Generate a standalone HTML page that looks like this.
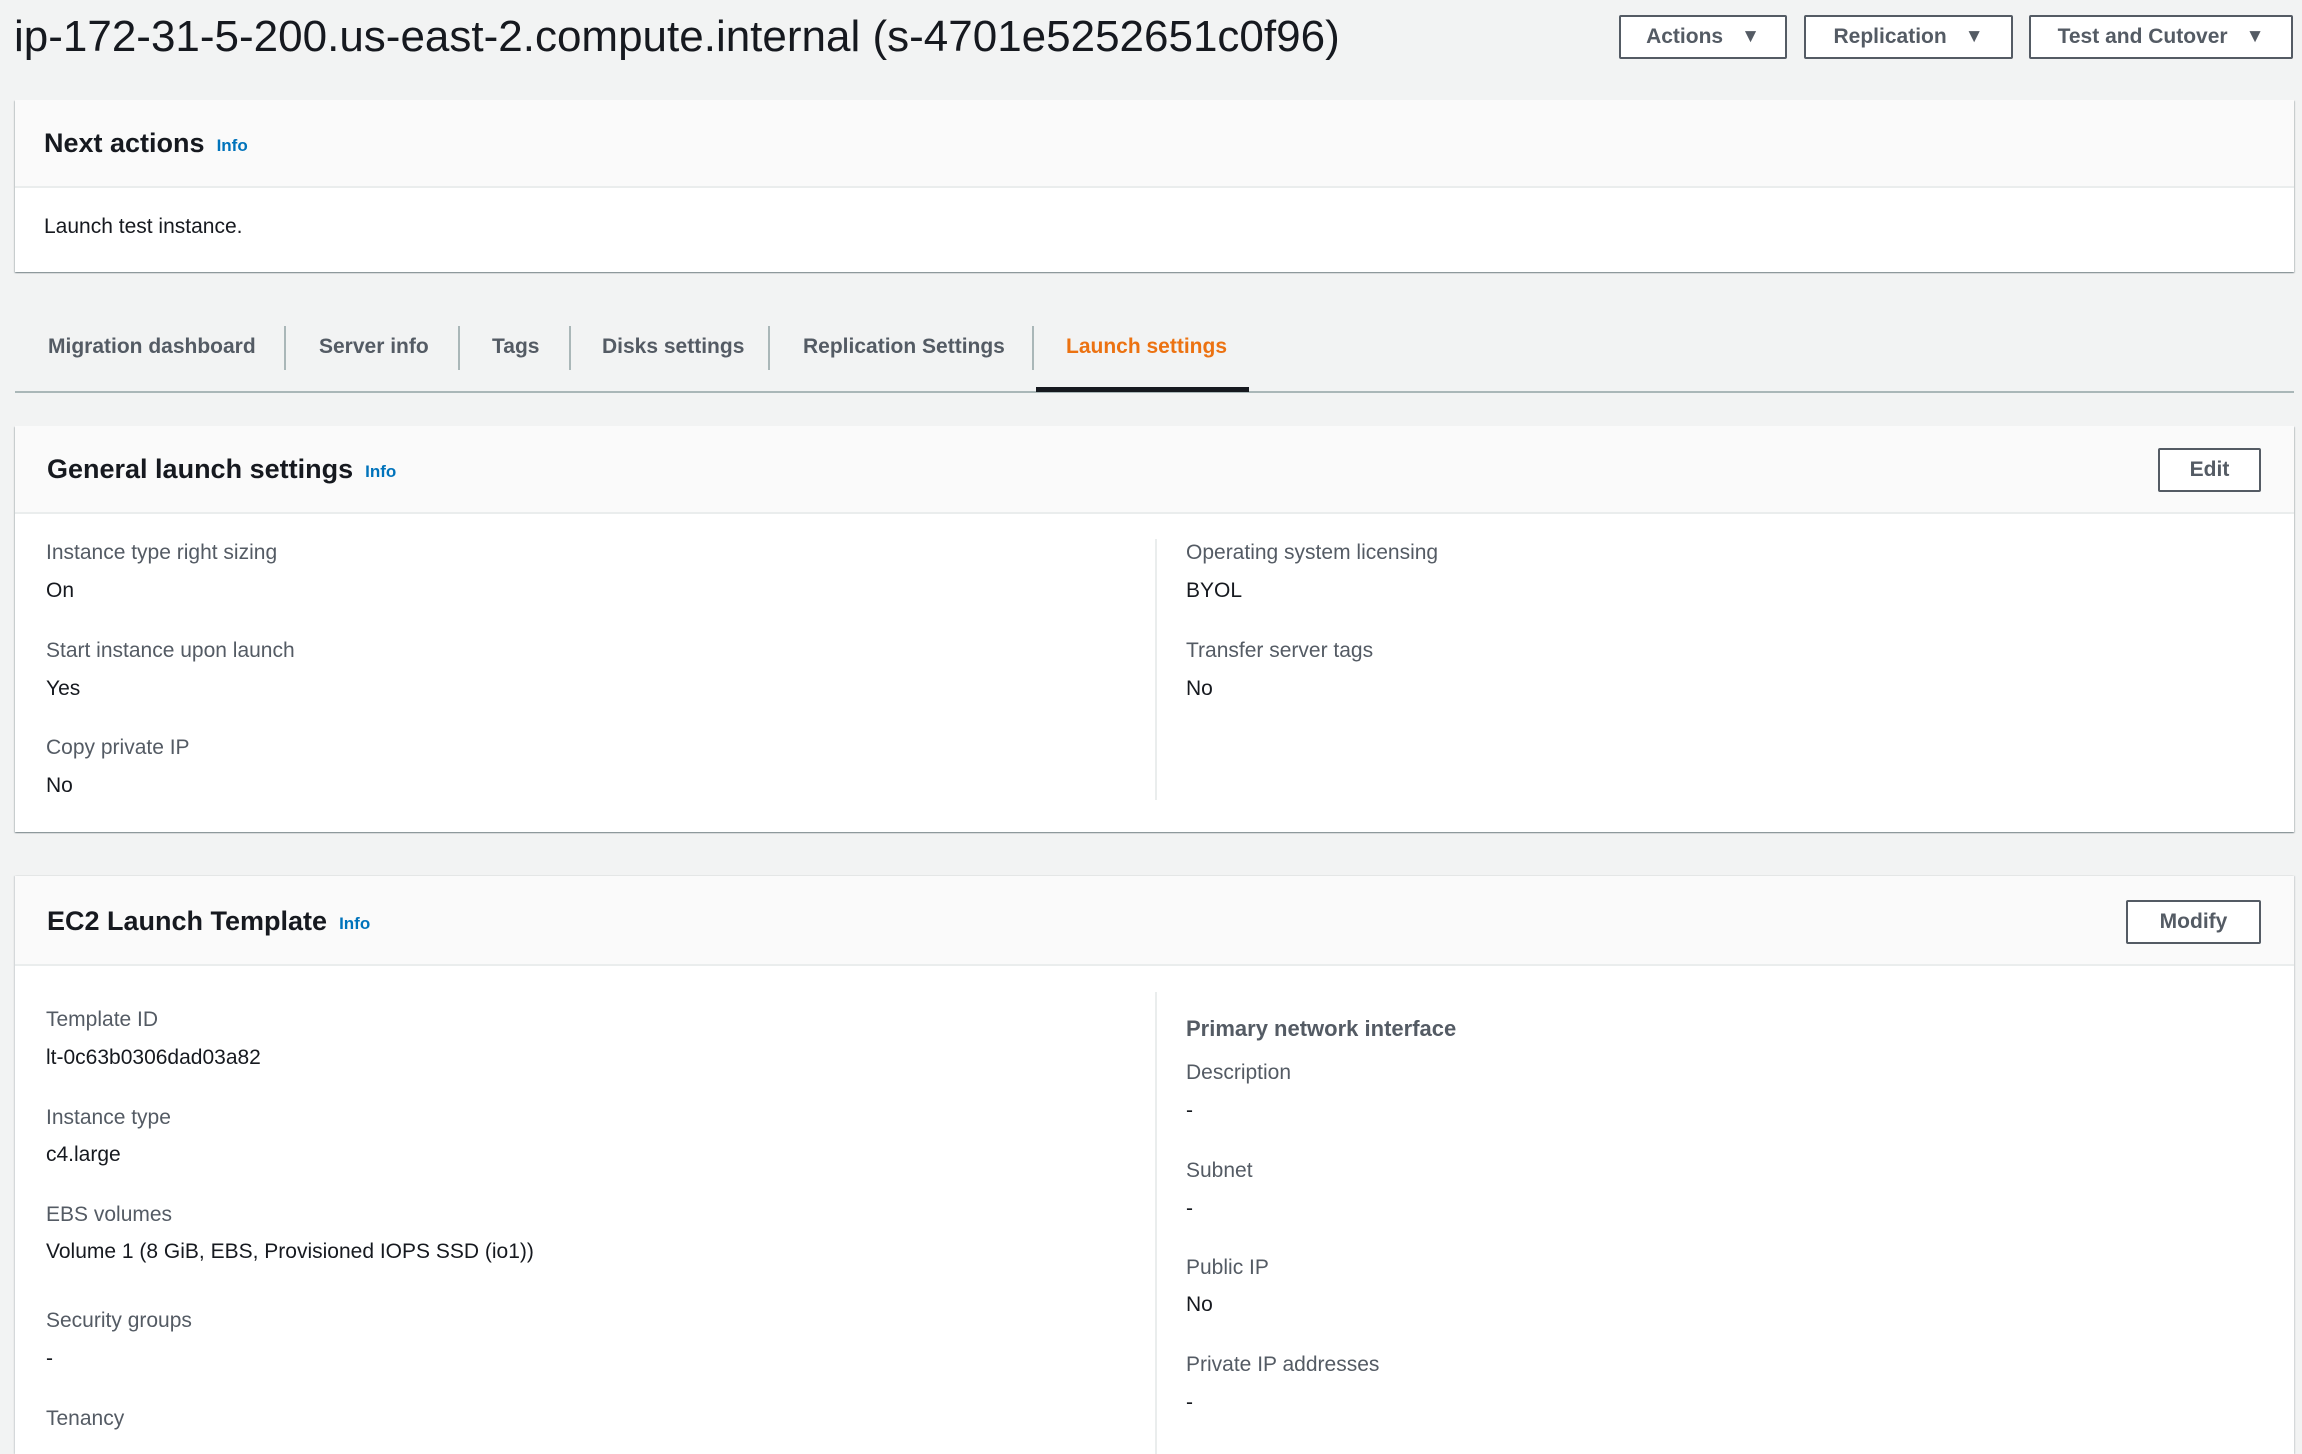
<!DOCTYPE html>
<html><head><meta charset="utf-8"><style>
*{margin:0;padding:0;box-sizing:border-box}
html,body{width:2302px;height:1454px;overflow:hidden}
body{background:#f2f3f3;font-family:"Liberation Sans",sans-serif;color:#16191f;position:relative}
.t{position:absolute;line-height:30px;white-space:nowrap}
.lab{font-size:21px;color:#545b64}
.val{font-size:21px;color:#16191f}
.h{font-size:27px;font-weight:bold;color:#16191f}
.info{font-size:17px;font-weight:bold;color:#0073bb;margin-left:12px;vertical-align:1px}
.btn{position:absolute;border:2px solid #545b64;border-radius:2px;background:#fff;color:#545b64;font-weight:bold;font-size:21px;display:flex;align-items:center;justify-content:center}
.btn .a{font-size:19px;margin-left:18px}
.card{position:absolute;left:15px;width:2279px;background:#fff;box-shadow:0 1px 1px rgba(0,28,36,.3),1px 1px 1px rgba(0,28,36,.15),-1px 1px 1px rgba(0,28,36,.15)}
.hd{position:absolute;left:0;top:0;width:100%;background:#fafafa;border-bottom:2px solid #eaeded}
.sep{position:absolute;top:326px;width:2px;height:44px;background:#aab7b8}
.tab{font-size:21px;font-weight:bold;color:#545b64;top:332px}
.vd{position:absolute;width:2px;background:#eaeded}
</style></head><body>
<div class="t" style="left:14px;top:13px;line-height:48px;font-size:44px;color:#16191f">ip-172-31-5-200.us-east-2.compute.internal (s-4701e5252651c0f96)</div>
<div class="btn" style="left:1619px;top:15px;width:168px;height:44px">Actions<span class="a">▼</span></div>
<div class="btn" style="left:1804px;top:15px;width:209px;height:44px">Replication<span class="a">▼</span></div>
<div class="btn" style="left:2029px;top:15px;width:264px;height:44px">Test and Cutover<span class="a">▼</span></div>

<div class="card" style="top:100px;height:172px">
<div class="hd" style="height:88px"></div>
</div>
<div class="t h" style="left:44px;top:128px">Next actions<span class="info">Info</span></div>
<div class="t val" style="left:44px;top:212px">Launch test instance.</div>

<div class="t tab" style="left:48px">Migration dashboard</div>
<div class="sep" style="left:284px"></div>
<div class="t tab" style="left:319px">Server info</div>
<div class="sep" style="left:458px"></div>
<div class="t tab" style="left:492px">Tags</div>
<div class="sep" style="left:569px"></div>
<div class="t tab" style="left:602px">Disks settings</div>
<div class="sep" style="left:768px"></div>
<div class="t tab" style="left:803px">Replication Settings</div>
<div class="sep" style="left:1032px"></div>
<div class="t tab" style="left:1066px;color:#ec7211">Launch settings</div>
<div style="position:absolute;left:15px;top:391px;width:2279px;height:2px;background:#aab7b8"></div>
<div style="position:absolute;left:1036px;top:387px;width:213px;height:5px;background:#16191f"></div>

<div class="card" style="top:426px;height:406px">
<div class="hd" style="height:88px"></div>
<div class="vd" style="left:1140px;top:113px;height:261px"></div>
</div>
<div class="t h" style="left:47px;top:454px">General launch settings<span class="info">Info</span></div>
<div class="btn" style="left:2158px;top:448px;width:103px;height:44px">Edit</div>
<div class="t lab" style="left:46px;top:538px">Instance type right sizing</div>
<div class="t val" style="left:46px;top:576px">On</div>
<div class="t lab" style="left:46px;top:636px">Start instance upon launch</div>
<div class="t val" style="left:46px;top:674px">Yes</div>
<div class="t lab" style="left:46px;top:733px">Copy private IP</div>
<div class="t val" style="left:46px;top:771px">No</div>
<div class="t lab" style="left:1186px;top:538px">Operating system licensing</div>
<div class="t val" style="left:1186px;top:576px">BYOL</div>
<div class="t lab" style="left:1186px;top:636px">Transfer server tags</div>
<div class="t val" style="left:1186px;top:674px">No</div>

<div class="card" style="top:876px;height:578px;box-shadow:1px 0 1px rgba(0,28,36,.15),-1px 0 1px rgba(0,28,36,.15)">
<div class="hd" style="height:90px"></div>
<div class="vd" style="left:1140px;top:116px;height:470px"></div>
</div>
<div class="t h" style="left:47px;top:906px">EC2 Launch Template<span class="info">Info</span></div>
<div class="btn" style="left:2126px;top:900px;width:135px;height:44px">Modify</div>
<div class="t lab" style="left:46px;top:1005px">Template ID</div>
<div class="t val" style="left:46px;top:1043px">lt-0c63b0306dad03a82</div>
<div class="t lab" style="left:46px;top:1103px">Instance type</div>
<div class="t val" style="left:46px;top:1140px">c4.large</div>
<div class="t lab" style="left:46px;top:1200px">EBS volumes</div>
<div class="t val" style="left:46px;top:1237px">Volume 1 (8 GiB, EBS, Provisioned IOPS SSD (io1))</div>
<div class="t lab" style="left:46px;top:1306px">Security groups</div>
<div class="t val" style="left:46px;top:1344px">-</div>
<div class="t lab" style="left:46px;top:1404px">Tenancy</div>
<div class="t" style="left:1186px;top:1014px;font-size:22px;font-weight:bold;color:#545b64">Primary network interface</div>
<div class="t lab" style="left:1186px;top:1058px">Description</div>
<div class="t val" style="left:1186px;top:1096px">-</div>
<div class="t lab" style="left:1186px;top:1156px">Subnet</div>
<div class="t val" style="left:1186px;top:1194px">-</div>
<div class="t lab" style="left:1186px;top:1253px">Public IP</div>
<div class="t val" style="left:1186px;top:1290px">No</div>
<div class="t lab" style="left:1186px;top:1350px">Private IP addresses</div>
<div class="t val" style="left:1186px;top:1388px">-</div>
</body></html>
